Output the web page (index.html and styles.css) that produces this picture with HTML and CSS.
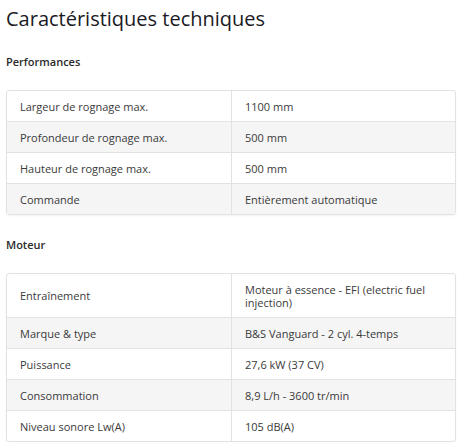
FILE: index.html
```html
<!DOCTYPE html>
<html lang="fr">
<head>
<meta charset="utf-8">
<link rel="stylesheet" href="styles.css">
</head>
<body>
<div class="page">
  <h1 class="title">Caractéristiques techniques</h1>
  <h2 class="section">Performances</h2>
  <table class="specs">
    <tr><td>Largeur de rognage max.</td><td>1100 mm</td></tr>
    <tr><td>Profondeur de rognage max.</td><td>500 mm</td></tr>
    <tr><td>Hauteur de rognage max.</td><td>500 mm</td></tr>
    <tr><td>Commande</td><td>Entièrement automatique</td></tr>
  </table>
  <h2 class="section">Moteur</h2>
  <table class="specs">
    <tr class="tall"><td>Entraînement</td><td>Moteur à essence - EFI (electric fuel injection)</td></tr>
    <tr><td>Marque &amp; type</td><td>B&amp;S Vanguard - 2 cyl. 4-temps</td></tr>
    <tr><td>Puissance</td><td>27,6 kW (37 CV)</td></tr>
    <tr><td>Consommation</td><td>8,9 L/h - 3600 tr/min</td></tr>
    <tr><td>Niveau sonore Lw(A)</td><td>105 dB(A)</td></tr>
  </table>
</div>
</body>
</html>
```
FILE: styles.css
```css
* { box-sizing: border-box; }
body {
  margin: 0;
  background: #fff;
  font-family: "Open Sans", "Liberation Sans", sans-serif;
  color: #333;
}
.page {
  padding: 5px 9px 0 6px;
}
.title {
  margin: 0;
  font-size: 20px;
  font-weight: 400;
  line-height: 27px;
  color: #1a1a24;
}
.section {
  margin: 0;
  font-size: 11px;
  font-weight: 600;
  color: #2a2a2a;
  line-height: 15px;
  padding: 22px 0 21px 0;
}
.specs {
  width: 100%;
  border-collapse: separate;
  border-spacing: 0;
  border: 1px solid #e2e2e2;
  border-radius: 3px;
  box-shadow: 0 1px 2px rgba(0,0,0,0.05);
  font-size: 11px;
  line-height: 13px;
}
.specs td {
  height: 31px;
  padding: 0 13px;
  vertical-align: middle;
  border-top: 1px solid #e2e2e2;
  color: #3a3a3a;
}
.specs tr:first-child td { border-top: none; height: 30px; }
.specs tr.tall td { height: 43px; }
.specs td:first-child {
  width: 225px;
  border-right: 1px solid #e2e2e2;
}
.specs tr:nth-child(even) td { background: #f5f5f5; }
```
